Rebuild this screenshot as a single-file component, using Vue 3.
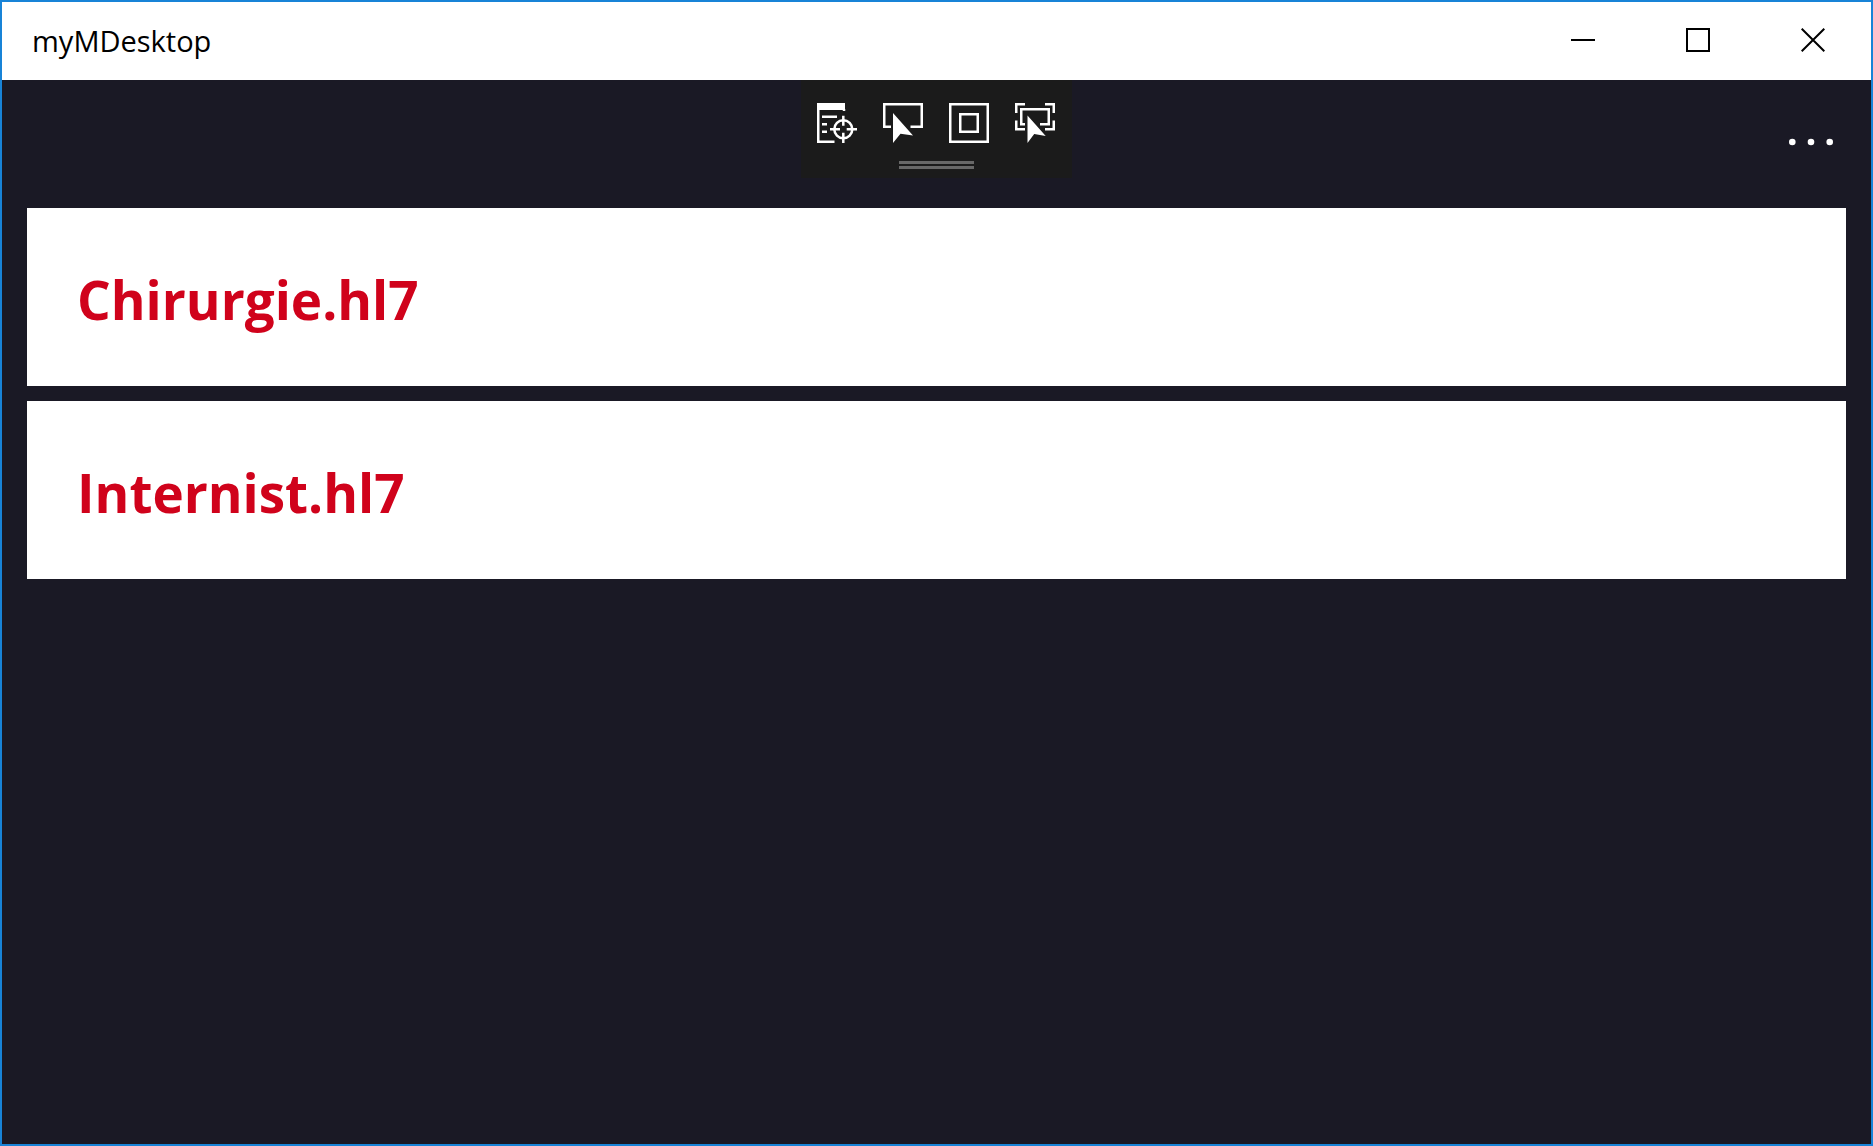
<script setup>
const files = ['Chirurgie.hl7', 'Internist.hl7']
</script>

<template>
  <div class="window">
    <header class="titlebar">
      <h1 class="title">myMDesktop</h1>
      <div class="controls">
        <button type="button" aria-label="Minimize">
          <svg width="24" height="24" viewBox="0 0 24 24"><path d="M0 12H24" /></svg>
        </button>
        <button type="button" aria-label="Maximize">
          <svg width="24" height="24" viewBox="0 0 24 24"><path d="M1 1H23V23H1Z" /></svg>
        </button>
        <button type="button" aria-label="Close">
          <svg width="24" height="24" viewBox="0 0 24 24"><path d="M0.7 0.7L23.3 23.3M23.3 0.7L0.7 23.3" /></svg>
        </button>
      </div>
    </header>

    <div class="debug">
      <div class="tools">
        <button type="button" aria-label="Go to live visual tree">
          <svg width="40" height="40" viewBox="0 0 40 40">
            <path class="fill" d="M0 0H28V7H0Z" />
            <path d="M1.25 0V38.75H17.5M27 6V8M5 13.8H20M5 21.2H10M5 28.7H10" />
            <circle cx="26.3" cy="26.3" r="9" />
            <path d="M26.3 12.8V22.8M26.3 29.8V40M13 26.3H23M29.7 26.3H40" />
          </svg>
        </button>
        <button type="button" aria-label="Enable selection">
          <svg width="40" height="40" viewBox="0 0 40 40">
            <path d="M8 23.75H1.25V1.25H38.75V23.75H27.5" />
            <path class="fill" d="M10 10V40L17.5 30.7L30 32.5Z" />
          </svg>
        </button>
        <button type="button" aria-label="Display layout adorners">
          <svg width="40" height="40" viewBox="0 0 40 40">
            <path d="M1.25 1.25H38.75V38.75H1.25ZM11.25 11.25H28.75V28.75H11.25Z" />
          </svg>
        </button>
        <button type="button" aria-label="Track focused element">
          <svg width="40" height="40" viewBox="0 0 40 40">
            <path d="M10 1.25H1.25V10M30 1.25H38.75V10M1.25 17.5V26.25H10M38.75 17.5V26.25H30" />
            <path d="M10 21.25H6.25V6.25H33.75V21.25H25" />
            <path class="fill" d="M12.5 12.5V40L19.2 31L30.7 33Z" />
          </svg>
        </button>
      </div>
      <div class="grip"></div>
    </div>

    <div class="commandbar">
      <button type="button" class="more" aria-label="More options">
        <svg width="46" height="8" viewBox="0 0 46 8">
          <circle cx="4.3" cy="4" r="3.3" />
          <circle cx="23" cy="4" r="3.3" />
          <circle cx="41.7" cy="4" r="3.3" />
        </svg>
      </button>
    </div>

    <main>
      <ul class="files">
        <li v-for="file in files" :key="file" class="card">
          <h2>{{ file }}</h2>
        </li>
      </ul>
    </main>
  </div>
</template>

<style>
body {
  margin: 0;
}
</style>

<style scoped>
.window {
  position: relative;
  box-sizing: border-box;
  min-height: 100vh;
  border: 2px solid #1883d7;
  background: #1a1925;
  font-family: "Open Sans", "Noto Sans", sans-serif;
}

button {
  display: flex;
  align-items: center;
  justify-content: center;
  padding: 0;
  border: 0;
  background: none;
}

svg {
  display: block;
}

.titlebar {
  display: flex;
  justify-content: space-between;
  height: 78px;
  background: #fff;
}

.title {
  margin: 0;
  padding-left: 30px;
  font-size: 29px;
  font-weight: 400;
  line-height: 78px;
  color: #000;
}

.controls {
  display: flex;
  height: 76px;
  padding-right: 1px;
}

.controls button {
  width: 115px;
}

.controls path {
  fill: none;
  stroke: #000;
  stroke-width: 2;
}

.debug {
  position: absolute;
  top: 78px;
  left: 0;
  right: 0;
  box-sizing: border-box;
  width: 271px;
  height: 98px;
  margin: 0 auto;
  padding: 23px 17px 0 16px;
  background: #1b1b1b;
}

.tools {
  display: flex;
  justify-content: space-between;
}

.tools path,
.tools circle {
  fill: none;
  stroke: #fff;
  stroke-width: 2.5;
}

.tools .fill {
  fill: #fff;
  stroke: none;
}

.grip {
  width: 75px;
  height: 2px;
  margin: 18px auto 0;
  border-top: 3px solid #686868;
  border-bottom: 3px solid #686868;
}

.commandbar {
  display: flex;
  justify-content: flex-end;
  height: 128px;
  padding-right: 25px;
}

.more {
  width: 70px;
  height: 124px;
}

.more circle {
  fill: #fff;
}

.files {
  display: flex;
  flex-direction: column;
  gap: 15px;
  margin: 0;
  padding: 0 25px;
  list-style: none;
}

.card {
  display: flex;
  align-items: center;
  box-sizing: border-box;
  height: 178px;
  padding: 6px 50px 0;
  background: #fff;
}

h2 {
  margin: 0;
  font-size: 53px;
  font-weight: 700;
  line-height: 80px;
  color: #d0021b;
}
</style>
